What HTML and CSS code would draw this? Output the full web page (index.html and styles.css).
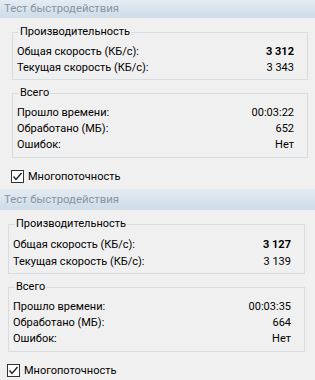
FILE: index.html
```html
<!DOCTYPE html>
<html lang="ru">
<head>
    <meta charset="UTF-8">
    <title>Тест быстродействия</title>
    <link rel="stylesheet" href="styles.css">
</head>
<body>
    <div class="panel">
        <div class="titlebar">Тест быстродействия</div>
        <div class="panel-body">
            <fieldset class="group group-perf">
                <legend>Производительность</legend>
                <div class="row"><span>Общая скорость (КБ/с):</span><b>3 312</b></div>
                <div class="row"><span>Текущая скорость (КБ/с):</span><span>3 343</span></div>
            </fieldset>
            <fieldset class="group group-total">
                <legend>Всего</legend>
                <div class="row"><span>Прошло времени:</span><span>00:03:22</span></div>
                <div class="row"><span>Обработано (МБ):</span><span>652</span></div>
                <div class="row"><span>Ошибок:</span><span>Нет</span></div>
            </fieldset>
            <label class="check">
                <svg class="box" width="13" height="13" viewBox="0 0 13 13">
                    <rect x="0.5" y="0.5" width="12" height="12" fill="#fff" stroke="#333"/>
                    <path d="M2.5 6.5 L5 9.5 L10.5 3" fill="none" stroke="#222" stroke-width="1.4"/>
                </svg>
                Многопоточность
            </label>
        </div>
    </div>

    <div class="panel panel-second">
        <div class="titlebar">Тест быстродействия</div>
        <div class="panel-body">
            <fieldset class="group group-perf">
                <legend>Производительность</legend>
                <div class="row"><span>Общая скорость (КБ/с):</span><b>3 127</b></div>
                <div class="row"><span>Текущая скорость (КБ/с):</span><span>3 139</span></div>
            </fieldset>
            <fieldset class="group group-total">
                <legend>Всего</legend>
                <div class="row"><span>Прошло времени:</span><span>00:03:35</span></div>
                <div class="row"><span>Обработано (МБ):</span><span>664</span></div>
                <div class="row"><span>Ошибок:</span><span>Нет</span></div>
            </fieldset>
            <label class="check">
                <svg class="box" width="13" height="13" viewBox="0 0 13 13">
                    <rect x="0.5" y="0.5" width="12" height="12" fill="#fff" stroke="#333"/>
                    <path d="M2.5 6.5 L5 9.5 L10.5 3" fill="none" stroke="#222" stroke-width="1.4"/>
                </svg>
                Многопоточность
            </label>
        </div>
    </div>
</body>
</html>
```

FILE: styles.css
```css
body {
    margin: 0;
    width: 315px;
    height: 380px;
    overflow: hidden;
    background-color: #f0f0f0;
    font-family: Roboto, 'Noto Sans', sans-serif;
    font-size: 11px;
    color: #000;
}

.panel {
    height: 189px;
    background-color: #f0f0f0;
}

.titlebar {
    height: 18px;
    line-height: 17px;
    padding-left: 4px;
    font-size: 11.3px;
    color: #8795a3;
    background: linear-gradient(#e4ecf3, #cedbe7);
}

.panel-body {
    padding: 6px 7px 0 12px;
}

.group {
    margin: 0;
    padding: 4px 13px 3px 4px;
    border: 1px solid #d8dde1;
}

.group legend {
    padding: 0 1px;
    margin-left: 2px;
    line-height: 16px;
}

.group-total {
    margin-top: 5px;
    padding-bottom: 4px;
}

.row {
    display: flex;
    justify-content: space-between;
    height: 16px;
    line-height: 16px;
}

.row b {
    font-weight: bold;
}

.check {
    display: flex;
    align-items: center;
    gap: 4px;
    height: 16px;
    margin-top: 10px;
    margin-left: -1px;
}

.check .box {
    flex: none;
}

.panel-second .titlebar {
    height: 21px;
    line-height: 21px;
}

.panel-second .panel-body {
    padding: 6px 10px 0 8px;
}

.panel-second .group-perf .row {
    height: 17px;
    line-height: 17px;
}
```
